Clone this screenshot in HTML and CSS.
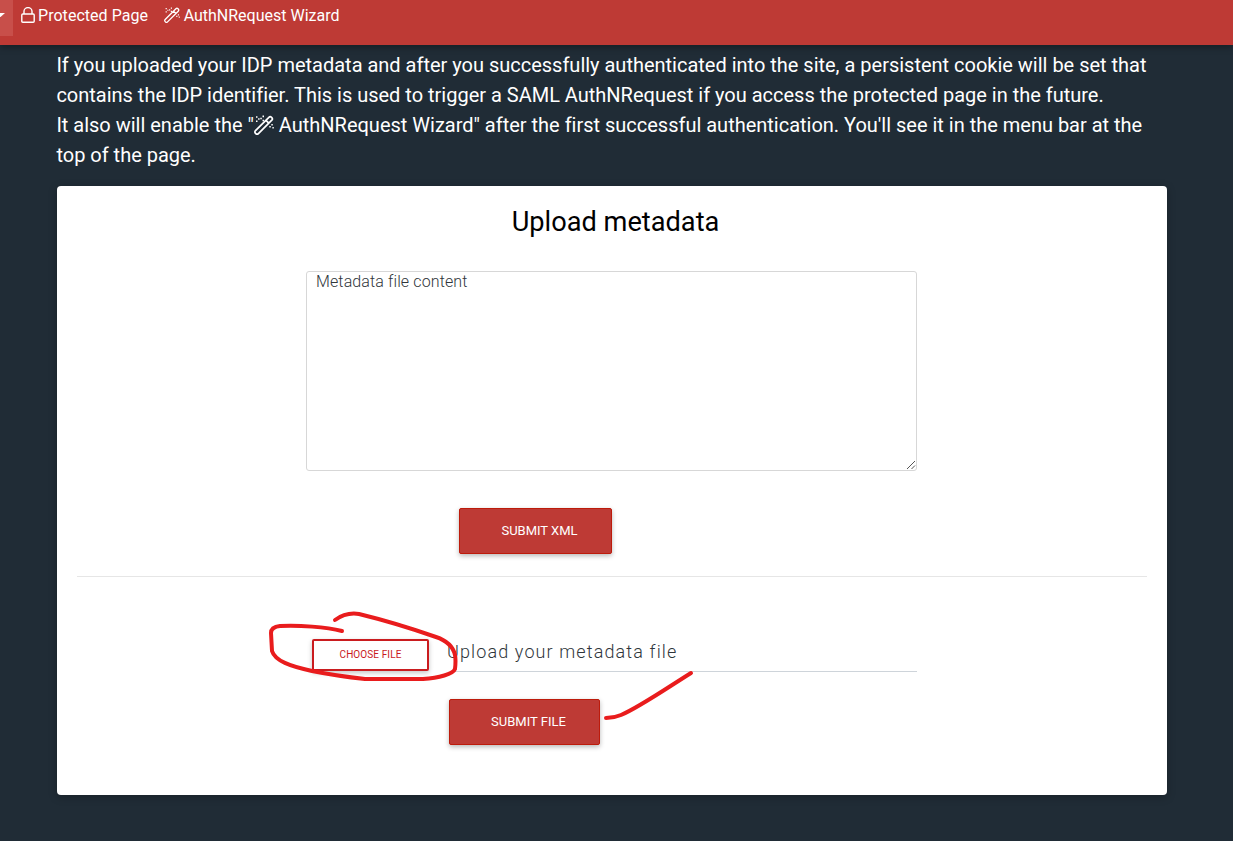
FILE: index.html
```html
<!DOCTYPE html>
<html lang="en">
<head>
<meta charset="utf-8">
<title>Upload metadata</title>
<link rel="stylesheet" href="styles.css">
</head>
<body>
<svg class="sprite" aria-hidden="true">
  <symbol id="wand" viewBox="0 0 20 20">
    <g fill="none" stroke="currentColor" stroke-width="1.7" stroke-linejoin="round">
      <path d="M1.5 15.7 14.9 2.3Q16.2 1 17.5 2.3L17.8 2.6Q19.1 3.9 17.8 5.2L4.4 18.6Q3.1 19.9 1.8 18.6L1.5 18.3Q.2 17 1.5 15.7ZM12 5.3 14.8 8.1"/>
    </g>
    <path fill="currentColor" d="M2 1.3h1.5v1.5H2zM4.1 3.3h1.5v1.5H4.1zM2 5.4h1.5v1.5H2zM8.5.6H10v1.6H8.5zM6.3 2.8h1.5v1.5H6.3zM8.5 4.8H10v1.5H8.5zM17.3 9h1.5v1.5h-1.5zM15.3 11h1.5v1.5h-1.5zM18.4 12h1.4v1.4h-1.4z"/>
  </symbol>
</svg>
<nav class="navbar">
  <span class="nav-active"><i class="caret"></i></span>
  <a class="nav-link"><svg class="lock" viewBox="0 0 14 16"><path d="M3 7V4.3a4 3.7 0 0 1 8 0V7M1.8 7h10.4q1 0 1 1v6.2q0 1-1 1H1.8q-1 0-1-1V8q0-1 1-1Z"/></svg><span class="nav-page">Protected Page</span></a>
  <a class="nav-link nav-wizard"><svg class="wand-small"><use href="#wand"/></svg><span class="nav-title">AuthNRequest Wizard</span></a>
</nav>
<main class="content">
  <div class="intro">
    <div class="l1">If you uploaded your IDP metadata and after you successfully authenticated into the site, a persistent cookie will be set that</div>
    <div class="l2">contains the IDP identifier. This is used to trigger a SAML AuthNRequest if you access the protected page in the future.</div>
    <div class="l3">It also will enable the "<svg class="wand-large"><use href="#wand"/></svg> AuthNRequest Wizard" after the first successful authentication. You'll see it in the menu bar at the</div>
    <div class="l4">top of the page.</div>
  </div>
  <section class="card">
    <h1 class="title">Upload metadata</h1>
    <div class="xml-box">Metadata file content
      <svg class="grip" viewBox="0 0 10 10"><path d="M1 9 9 1M5.5 9 9 5.5"/></svg>
    </div>
    <button class="submit submit-xml">SUBMIT XML</button>
    <hr class="divider">
    <div class="file-row">
      <button class="choose">CHOOSE FILE</button>
      <div class="file-path">Upload your metadata file</div>
    </div>
    <button class="submit submit-file">SUBMIT FILE</button>
  </section>
</main>
<svg class="ink" viewBox="0 0 1233 841">
  <path d="M342 631C326 627 299 625 280 626Q271 627 271 633L272 651C275 661 290 666 312 671Q337 676 365 679L423 679C439 678 453 674 455 669Q456 660 455 655C453 646 445 640 436 637Q396 623 359 614Q346 612 335 620"/>
  <path d="M606 718Q614 718 621 715C638 708 667 688 691 673"/>
</svg>
</body>
</html>
```

FILE: styles.css
```css
* { box-sizing: border-box; }
body {
  margin: 0;
  height: 841px;
  overflow: hidden;
  background: #202c36;
  font-family: Roboto, sans-serif;
}
.sprite { position: absolute; width: 0; height: 0; }
.navbar {
  display: flex;
  height: 45px;
  background: #be3a35;
  color: #fff;
  font-size: 16px;
  line-height: 31px;
  white-space: nowrap;
  box-shadow: 0 2px 7px rgba(0, 0, 0, .35);
}
.nav-active {
  width: 13px;
  height: 36px;
  padding-top: 13px;
  background: #c84f4a;
}
.caret {
  display: block;
  width: 5px;
  height: 4px;
  background: #fff;
  clip-path: polygon(0 0, 100% 0, 10% 100%, 0 100%);
}
.nav-link { display: flex; margin-left: 8px; }
.nav-page { letter-spacing: .04px; }
.nav-wizard { margin-left: 15px; }
.lock {
  width: 14px;
  height: 16px;
  margin: 7px 3px 0 0;
  fill: none;
  stroke: #fff;
  stroke-width: 1.4;
}
.wand-small { width: 16px; height: 16px; margin: 7px 3.6px 0 1px; }
.content { width: 1110px; margin: 5px 0 0 57px; }
.intro {
  height: 120px;
  margin-left: -.6px;
  color: #fff;
  font-size: 20px;
  line-height: 30px;
  letter-spacing: -.008px;
  white-space: nowrap;
}
.wand-large { width: 20px; height: 20px; vertical-align: -3px; }
.card {
  height: 609px;
  margin-top: 16px;
  padding: 20px;
  background: #fff;
  border-radius: 4px;
  box-shadow: 0 2px 8px rgba(0, 0, 0, .25);
}
.title {
  margin: 0 0 33px 7px;
  color: #000;
  font-size: 27.2px;
  font-weight: 400;
  line-height: 32px;
  text-align: center;
}
.xml-box {
  position: relative;
  width: 611px;
  height: 200px;
  margin-left: 229px;
  padding-left: 9px;
  border: 1px solid #d7d7d7;
  border-radius: 3px;
  color: #30363b;
  font-size: 16px;
  font-weight: 300;
  line-height: 19px;
  letter-spacing: .12px;
}
.grip {
  position: absolute;
  right: 0;
  bottom: 0;
  width: 10px;
  height: 10px;
  fill: none;
  stroke: #555;
  stroke-width: 1;
}
.submit {
  display: block;
  height: 46px;
  padding: 0 0 2px 8px;
  background: #be3a35;
  border: 1px solid #bd1b0b;
  border-radius: 2px;
  color: #fff;
  font: 400 13px Roboto, sans-serif;
  box-shadow: 0 2px 5px rgba(0, 0, 0, .28);
}
.submit-xml { width: 153px; margin: 37px 0 0 382px; }
.submit-file { width: 151px; margin: 27px 0 0 372px; }
.divider { height: 1px; margin: 22px 0 62px; border: 0; background: #e6e6e6; }
.file-row { display: flex; height: 33px; margin-left: 235px; }
.choose {
  width: 117px;
  height: 32px;
  padding: 0 0 2px;
  background: #fff;
  border: 2px solid #ca1c1f;
  border-radius: 2px;
  color: #c9191c;
  font: 400 10px Roboto, sans-serif;
  letter-spacing: .1px;
  box-shadow: 0 2px 5px rgba(0, 0, 0, .23);
}
.file-path {
  width: 462px;
  margin-left: 26px;
  text-indent: -8px;
  border-bottom: 1px solid #ced4da;
  color: #30363b;
  font-size: 18px;
  font-weight: 300;
  line-height: 25px;
  letter-spacing: 1.12px;
}
/* Freehand annotation strokes over the form */
.ink {
  position: absolute;
  inset: 0;
  width: 1233px;
  height: 841px;
  fill: none;
  stroke: #e91c1d;
  stroke-width: 4;
  stroke-linecap: round;
  stroke-linejoin: round;
  pointer-events: none;
}
```
